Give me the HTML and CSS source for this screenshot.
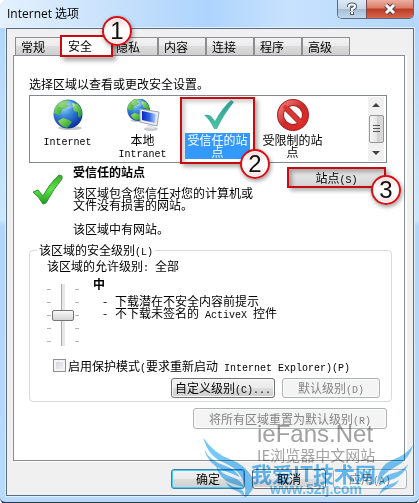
FILE: index.html
```
<!DOCTYPE html>
<html lang="zh-CN">
<head>
  <meta charset="UTF-8" />
  <title>Internet 选项</title>
  <link rel="stylesheet" href="styles.css">
</head>
<body>
  <!-- Shared shapes -->
  <svg width="0" height="0" class="defs" aria-hidden="true">
    <defs>
      <radialGradient id="sea" cx="35%" cy="25%" r="80%">
        <stop offset="0" stop-color="#a5dcf8" />
        <stop offset="0.4" stop-color="#3b8bdc" />
        <stop offset="1" stop-color="#07299b" />
      </radialGradient>
      <linearGradient id="land" x1="0" y1="0" x2="1" y2="1">
        <stop offset="0" stop-color="#a5e86a" />
        <stop offset="1" stop-color="#18942a" />
      </linearGradient>
      <linearGradient id="screen" x1="0" y1="0" x2="1" y2="0">
        <stop offset="0" stop-color="#0826c4" />
        <stop offset="0.5" stop-color="#2f62e4" />
        <stop offset="1" stop-color="#b4d0fa" />
      </linearGradient>
      <linearGradient id="teal" x1="0" y1="0" x2="0" y2="1">
        <stop offset="0" stop-color="#2f9d94" />
        <stop offset="1" stop-color="#4cc5a4" />
      </linearGradient>
      <linearGradient id="green" x1="0" y1="0" x2="0" y2="1">
        <stop offset="0" stop-color="#3fa92e" />
        <stop offset="0.5" stop-color="#5fe24c" />
        <stop offset="1" stop-color="#1f9a1c" />
      </linearGradient>
      <linearGradient id="red" x1="0" y1="0" x2="1" y2="1">
        <stop offset="0" stop-color="#f08078" />
        <stop offset="0.5" stop-color="#cf2a2a" />
        <stop offset="1" stop-color="#e02a26" />
      </linearGradient>
      <symbol id="globe" viewBox="0 0 32 32">
        <ellipse cx="18" cy="29" rx="12" ry="2" fill="#c4c8c8" />
        <circle cx="16" cy="15" r="14.5" fill="url(#sea)" />
        <path d="M3 9 Q7 2 14 1 L17 2 L14 5 L17 7 L13 10 L10 10 L9 14 L6 16 L2 14 Z" fill="url(#land)" />
        <path d="M20 4 L25 5 Q30 9 30 15 L28 19 L26 17 L26 13 L22 12 L21 8 Z" fill="url(#land)" />
        <path d="M6 22 L11 19 L17 21 L20 23 L17 27 L15 29 Q9 28 6 22 Z" fill="url(#land)" />
        <ellipse cx="15" cy="6" rx="8" ry="4" fill="#fff" opacity="0.25" />
      </symbol>
    </defs>
  </svg>

  <div class="window">
    <header class="titlebar">
      <h1>Internet 选项</h1>
      <div class="caption-buttons">
        <button class="help-btn" aria-label="帮助">
          <svg width="12" height="14" viewBox="0 0 12 14">
            <path d="M3 5 V4 Q3 2.500 6 2.500 Q9 2.500 9 4.500 Q9 6 6 7 V9 M6 10 V13" fill="none" stroke="#505862" stroke-width="4" />
            <path d="M3 5 V4 Q3 2.500 6 2.500 Q9 2.500 9 4.500 Q9 6 6 7 V9 M6 10 V12" fill="none" stroke="#fff" stroke-width="2" />
          </svg>
        </button>
        <button class="close-btn" aria-label="关闭">
          <svg width="14" height="12" viewBox="0 0 14 12">
            <path d="M3 2 L11 10 M11 2 L3 10" stroke="#51404a" stroke-width="5" />
            <path d="M3 2 L11 10 M11 2 L3 10" stroke="#fff" stroke-width="3" />
          </svg>
        </button>
      </div>
    </header>

    <main class="dialog">
      <nav class="tabs">
        <button class="tab">常规</button>
        <button class="tab active">安全<span class="badge badge-tab">1</span></button>
        <button class="tab">隐私</button>
        <button class="tab">内容</button>
        <button class="tab">连接</button>
        <button class="tab">程序</button>
        <button class="tab">高级</button>
      </nav>

      <section class="panel">
        <p>选择区域以查看或更改安全设置。</p>

        <!-- Zones -->
        <div class="zones">
          <button class="zone">
            <svg width="32" height="32"><use href="#globe" /></svg>
            <span class="name"><span class="en">Internet</span></span>
          </button>
          <button class="zone">
            <svg width="34" height="32" viewBox="0 0 34 32">
              <use href="#globe" x="0" y="-1" width="25" height="25" />
              <ellipse cx="25" cy="30" rx="7" ry="2" fill="#c9cccf" />
              <path d="M22 24 L27 25 L28 30 L21 29 Z" fill="#e2e5ea" />
              <path d="M14 10 L33 13 L31 27 L14 23 Z" fill="#e9edf3" stroke="#9aa5b5" />
              <path d="M16 12 L30 15 L29 24 L16 21 Z" fill="url(#screen)" />
            </svg>
            <span class="name">本地<br><span class="en">Intranet</span></span>
          </button>
          <button class="zone selected">
            <svg width="32" height="32" viewBox="0 0 32 32">
              <path d="M2 16 Q6 15 9 17 L13 22 Q20 9 29 1 L32 3 Q22 15 15 30 H12 Q8 21 2 16 Z" fill="url(#teal)" />
            </svg>
            <span class="name">受信任的站<br>点</span>
            <span class="badge badge-zone">2</span>
          </button>
          <button class="zone">
            <svg width="32" height="32" viewBox="0 0 32 32">
              <circle cx="16" cy="16" r="12.500" fill="#fff" stroke="#a91f22" stroke-width="7" />
              <path d="M7 7 L25 25" stroke="#b52225" stroke-width="6" />
              <circle cx="16" cy="16" r="12.500" fill="none" stroke="url(#red)" stroke-width="5" />
              <path d="M7 7 L25 25" stroke="#d93632" stroke-width="4" />
            </svg>
            <span class="name">受限制的站<br>点</span>
          </button>
          <div class="scrollbar">
            <svg width="8" height="4"><path d="M0 4 L4 0 L8 4 Z" fill="#444" /></svg>
            <div class="thumb"></div>
            <svg width="8" height="4"><path d="M0 0 L4 4 L8 0 Z" fill="#444" /></svg>
          </div>
        </div>

        <!-- Selected zone -->
        <div class="zone-info">
          <svg class="check" width="32" height="32" viewBox="0 0 32 32">
            <path d="M2 18 L7 16 L12 22 Q18 10 28 1 L31 2 L31 5 Q23 14 15 29 L12 30 Q8 23 2 18 Z" fill="url(#green)" stroke="#2d9427" />
          </svg>
          <div class="description">
            <h2>受信任的站点</h2>
            <p>该区域包含您信任对您的计算机或<br>文件没有损害的网站。</p>
            <p>该区域中有网站。</p>
          </div>
          <button class="sites-btn">站点<span class="en">(S)</span><span class="badge badge-sites">3</span></button>
        </div>

        <!-- Security level -->
        <fieldset class="level">
          <legend>该区域的安全级别<span class="en">(L)</span></legend>
          <label for="level">该区域的允许级别<span class="en">: </span>全部</label>
          <div class="level-row">
            <div class="slider">
              <input type="range" id="level" min="0" max="4" value="2">
            </div>
            <div>
              <h3>中</h3>
              <ul>
                <li>下载潜在不安全内容前提示</li>
                <li>不下载未签名的<span class="en"> ActiveX </span>控件</li>
              </ul>
            </div>
          </div>
          <div class="protect">
            <input type="checkbox" id="protect">
            <label for="protect">启用保护模式<span class="en">(</span>要求重新启动<span class="en"> Internet Explorer)(P)</span></label>
          </div>
          <div class="level-buttons">
            <button class="btn custom-btn">自定义级别<span class="en">(C)...</span></button>
            <button class="btn default-btn" disabled>默认级别<span class="en">(D)</span></button>
          </div>
        </fieldset>

        <button class="btn reset-btn" disabled>将所有区域重置为默认级别<span class="en">(R)</span></button>
      </section>

      <footer class="actions">
        <button class="btn ok-btn">确定</button>
        <button class="btn">取消</button>
        <button class="btn" disabled>应用<span class="en">(A)</span></button>
      </footer>
    </main>

    <!-- Site marks lying over the dialog -->
    <div class="watermark">
      <svg class="wings" width="224" height="88" viewBox="0 0 672 264" fill="#74c8fa">
        <path d="M25 65 Q55 110 105 130 Q160 150 178 200 Q176 228 148 246 Q160 205 128 168 Q112 150 82 138 Q38 118 25 65 Z" />
        <path d="M27 100 Q45 136 92 150 Q122 160 134 184 Q110 172 84 163 Q40 146 27 100 Z" />
        <path d="M62 148 Q80 176 112 184 Q142 194 146 214 Q128 208 108 202 Q74 190 62 148 Z" />
        <path d="M92 198 Q112 214 130 216 Q148 222 148 240 Q130 226 112 220 Q98 212 92 198 Z" />
        <path d="M655 87 Q632 118 592 132 Q548 150 546 208 Q562 172 600 154 Q642 132 655 87 Z" />
        <path d="M640 144 Q618 168 592 172 Q560 180 550 212 Q572 194 598 188 Q626 178 640 144 Z" />
        <path d="M612 192 Q596 204 580 206 Q562 210 552 236 Q570 220 586 216 Q602 210 612 192 Z" />
      </svg>
      <div class="mark-fans">ieFans.Net</div>
      <div class="mark-sub">IE浏览器中文网站</div>
      <div class="mark-it">我爱IT技术网</div>
      <div class="mark-url">www.52ij.com</div>
    </div>
  </div>
</body>
</html>
```
FILE: styles.css
```
* {
  box-sizing: border-box;
  margin: 0;
  padding: 0;
}
body {
  font-family: 'Noto Sans CJK SC', sans-serif;
  font-size: 12px;
  line-height: 12px;
  color: #000;
  background-color: #fff;
}
button {
  font: inherit;
  color: inherit;
  border: none;
  background: none;
}
p, h1, h2, h3, label, legend, li, button {
  white-space: nowrap;
}
.defs {
  position: absolute;
}
.en {
  font-family: 'Liberation Mono', monospace;
  font-size: 10px;
  line-height: 0;
  white-space: pre;
}

/* Window frame */
.window {
  position: relative;
  padding: 0 5px 6px 6px;
  border-bottom: 2px solid #27384d;
  border-radius: 7px 0 6px 6px;
  background: linear-gradient(#c4e0fc, #b3d6fc 30px, #cbe7fd 220px, #b2d5fd 226px, #b9daff);
}
.titlebar {
  display: flex;
  justify-content: space-between;
  height: 28px;
  margin-left: -6px;
  padding-left: 7px;
  border-radius: 7px 0 0 0;
  background: linear-gradient(90deg, #e4f1fd, #c5e0fb 120px, #aed4fd 50%, #c8e2fd 70%, #b2d7fe);
}
.titlebar h1 {
  font-family: 'Open Sans', 'Noto Sans CJK SC', sans-serif;
  font-size: 12px;
  font-weight: normal;
  line-height: 28px;
}
.caption-buttons {
  display: flex;
  height: 19px;
  border: 1px solid #5e6b7c;
  border-top: none;
  border-radius: 0 0 5px 5px;
  overflow: hidden;
}
.caption-buttons button {
  display: flex;
  align-items: center;
  justify-content: center;
}
.help-btn {
  width: 28px;
  background: linear-gradient(#dce9f7, #c6d7e8 50%, #a5bbd1 50%, #c1d8ee);
}
.caption-buttons .close-btn {
  width: 47px;
  border-left: 1px solid #7d4a50;
  background: linear-gradient(#ecafa2, #da7a68 45%, #bd3a24 50%, #d5674f);
}

/* Dialog */
.dialog {
  padding: 8px 6px 6px;
  border: 1px solid #5b6b80;
  box-shadow: 0 0 0 1px #e2f0fd;
  background-color: #f0f0f0;
}
.tabs {
  display: flex;
  height: 18px;
  margin-left: 2px;
}
.tab {
  width: 48px;
  padding: 0 0 0 5px;
  text-align: left;
  border: 1px solid #8c8e94;
  border-bottom: none;
  background: linear-gradient(#f3f3f3, #ebebeb 50%, #dcdcdc 50%, #cfcfcf);
}
.tab.active {
  position: relative;
  z-index: 1;
  width: 53px;
  height: 22px;
  margin: -2px -3px 0;
  padding-left: 6px;
  border: 2px solid #c80b10;
  background: #fff;
  box-shadow: 3px 4px 4px rgba(0, 0, 0, 0.3);
}
.panel {
  margin-right: 2px;
  padding: 22px 12px 31px 15px;
  border: 1px solid #898c95;
  background-color: #fff;
  box-shadow: 2px 1px 0 #fff;
}

/* Numbered callouts */
.badge {
  position: absolute;
  z-index: 2;
  width: 30px;
  height: 30px;
  border: 2px solid #d90f14;
  border-radius: 50%;
  background: linear-gradient(#f6d8d8, #fff 45%, #fff 65%, #f3dcdc);
  box-shadow: inset 0 0 0 1px #fff, 1px 2px 4px rgba(0, 0, 0, 0.4);
  color: #111;
  font-family: 'Liberation Sans', Arial, sans-serif;
  font-size: 24px;
  line-height: 26px;
  text-align: center;
}
.badge-tab {
  top: -21px;
  right: -21px;
}
.badge-zone {
  right: -17px;
  bottom: -17px;
}
.badge-sites {
  right: -17px;
  bottom: -19px;
}

/* Zone list */
.zones {
  display: flex;
  height: 68px;
  margin: 5px 5px 0 0;
  padding: 1px 2px 1px 0;
  border: 1px solid #828790;
}
.zone {
  display: flex;
  flex-direction: column;
  align-items: center;
  gap: 2px;
  width: 75px;
  padding-top: 2px;
}
.zone .name {
  line-height: 12px;
  padding: 1px 2px;
}
.zone.selected {
  position: relative;
  z-index: 1;
  margin-bottom: -3px;
  border: 2px solid #c80b10;
  padding-top: 0;
  box-shadow: 3px 3px 4px rgba(0, 0, 0, 0.3), inset 3px 3px 4px rgba(0, 0, 0, 0.2);
}
.zone.selected .name {
  color: #fff;
  background-color: #3399ff;
}
.scrollbar {
  display: flex;
  flex-direction: column;
  align-items: center;
  justify-content: space-between;
  width: 16px;
  margin-left: auto;
  padding: 6px 0;
  background-color: #f0f0f0;
}
.scrollbar .thumb {
  width: 15px;
  height: 28px;
  border: 1px solid #979797;
  border-radius: 2px;
  background: repeating-linear-gradient(#555 0 1px, transparent 1px 3px) center / 7px 9px no-repeat,
    linear-gradient(90deg, #f5f5f5, #e6e6e6 50%, #cfcfcf 50%, #dcdcdc);
}

/* Selected zone */
.zone-info {
  display: flex;
  align-items: flex-start;
  height: 81px;
  padding-top: 3px;
}
.check {
  margin: 8px 10px 0 2px;
}
.description {
  flex: 1;
}
.description h2 {
  font-size: 12px;
  margin-bottom: 9px;
}
.description p {
  margin-bottom: 12px;
}
.sites-btn {
  position: relative;
  width: 99px;
  height: 21px;
  margin: 1px 6px 0 0;
  border: 2px solid #c80b10;
  background: linear-gradient(#ededed, #d4d4d4);
  box-shadow: 3px 3px 4px rgba(0, 0, 0, 0.3), inset 3px 3px 4px rgba(0, 0, 0, 0.3);
}

/* Security level */
.level {
  min-width: 0;
  padding: 4px 11px 3px 17px;
  border: 1px solid #d9d9de;
  border-radius: 4px;
}
.level legend {
  margin-left: -10px;
  padding: 0 2px;
}
.level-row {
  display: flex;
  gap: 14px;
  height: 81px;
  margin-top: 6px;
}
.slider {
  width: 32px;
  height: 62px;
  margin-top: 6px;
  background: repeating-linear-gradient(#b5b5b5 0 1px, transparent 1px 13px) 0 5px / 4px 54px no-repeat,
    repeating-linear-gradient(#b5b5b5 0 1px, transparent 1px 13px) 28px 5px / 4px 54px no-repeat;
}
.slider input {
  appearance: none;
  display: block;
  writing-mode: vertical-lr;
  width: 22px;
  height: 62px;
  margin: 0 auto;
  background: linear-gradient(90deg, #a9a9a9 1px, #e7e7e7 1px) center / 4px 100% no-repeat;
}
.slider input::-webkit-slider-thumb {
  appearance: none;
  width: 22px;
  height: 11px;
  border: 1px solid #757575;
  border-radius: 2px;
  background: linear-gradient(#f8f8f8, #d3d3d3);
}
.level h3 {
  font-size: 12px;
  margin-bottom: 5px;
}
.level ul {
  list-style: none;
  padding-left: 10px;
}
.level li::before {
  content: '-';
  display: inline-block;
  width: 12px;
}
.protect {
  display: flex;
  align-items: center;
  gap: 2px;
  margin-left: 6px;
}
.protect input {
  appearance: none;
  width: 13px;
  height: 13px;
  border: 1px solid #8e8f8f;
  background: linear-gradient(135deg, #cbcfd5, #f6f6f6);
  box-shadow: inset 0 0 0 2px #f4f4f4;
}

/* Buttons */
.btn {
  width: 74px;
  height: 20px;
  border: 1px solid #707070;
  border-radius: 3px;
  background: linear-gradient(#f2f2f2, #ebebeb 50%, #dddddd 50%, #cfcfcf);
  box-shadow: inset 0 0 0 1px #fcfcfc;
}
.btn:disabled {
  color: #838383;
  border-color: #adb2b5;
  background: #f4f4f4;
}
.level-buttons {
  display: flex;
  justify-content: flex-end;
  gap: 7px;
  margin-top: 6px;
}
.custom-btn {
  width: 104px;
}
.default-btn {
  width: 98px;
}
.reset-btn {
  display: block;
  width: 194px;
  height: 21px;
  margin: 6px 5px 0 auto;
}
.actions {
  display: flex;
  justify-content: flex-end;
  gap: 7px;
  margin-top: 8px;
}
.ok-btn {
  border-color: #3c7fb1;
  box-shadow: inset 0 0 0 1px #43cdf5;
}

/* Site marks */
.watermark {
  position: absolute;
  right: 0;
  bottom: -2px;
  width: 224px;
  height: 88px;
  padding: 5px 0 0 62px;
  mix-blend-mode: multiply;
  pointer-events: none;
  white-space: nowrap;
}
.wings {
  position: absolute;
  top: 0;
  left: 0;
}
.mark-fans {
  color: #a0a0a0;
  font-family: 'Liberation Sans', Arial, sans-serif;
  font-size: 24px;
  line-height: 26px;
}
.mark-sub {
  color: #a3a3a3;
  font-size: 15px;
  line-height: 16px;
}
.mark-it {
  margin-left: -6px;
  color: #62bdf8;
  font-size: 21px;
  font-weight: bold;
  line-height: 20px;
}
.mark-url {
  margin-left: 13px;
  color: #74c8fa;
  font-family: 'Liberation Sans', Arial, sans-serif;
  font-size: 14px;
  line-height: 13px;
  font-weight: bold;
}
```
